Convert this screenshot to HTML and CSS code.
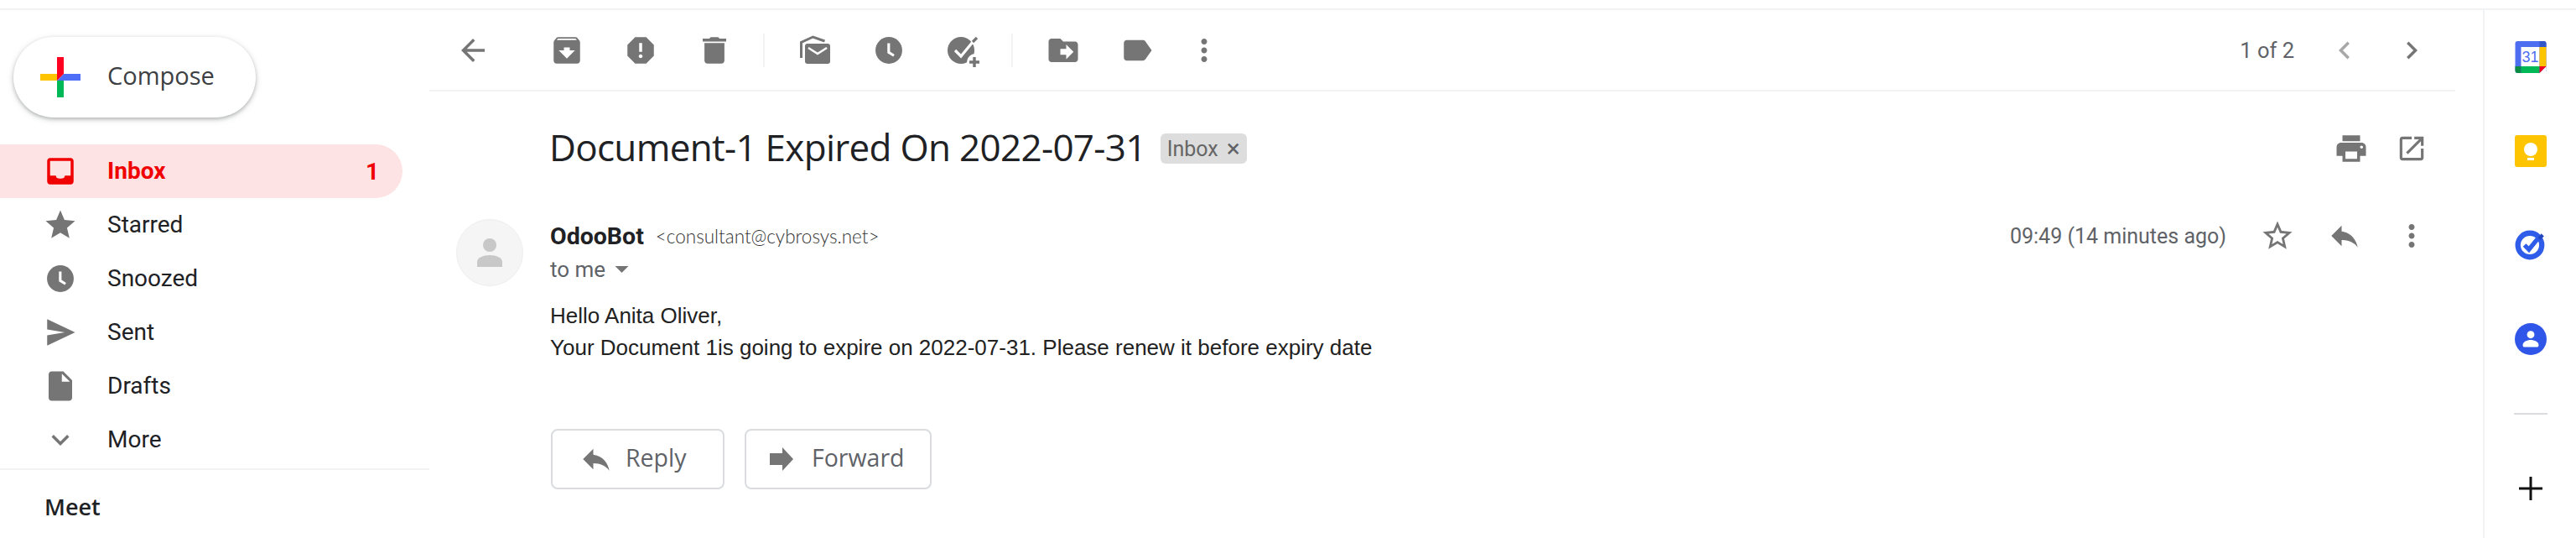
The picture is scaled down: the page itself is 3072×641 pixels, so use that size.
FILE: index.html
```html
<!DOCTYPE html>
<html>
<head>
<meta charset="utf-8">
<title>Inbox</title>
<link rel="stylesheet" href="styles.css">
</head>
<body>
<div class="topline"></div>
<div class="app">

<aside class="sidebar">
    <button class="compose">
        <svg class="compose-plus" viewBox="0 0 48 48">
            <polygon fill="#ffc400" points="0,20 20,20 20,28 0,28"/>
            <polygon fill="#00b956" points="20,28 28,28 28,48 20,48"/>
            <polygon fill="#4f6ef7" points="28,20 48,20 48,28 20,28"/>
            <polygon fill="#ff0020" points="20,0 28,0 28,20 20,28"/>
        </svg>
        <span class="compose-label">Compose</span>
    </button>
    <nav class="nav">
        <div class="nav-row active">
            <svg class="icon" viewBox="0 0 24 24"><path d="M19 3H4.99c-1.11 0-1.98.89-1.98 2L3 19c0 1.1.88 2 1.99 2H19c1.1 0 2-.9 2-2V5c0-1.11-.9-2-2-2zm0 12h-4c0 1.66-1.35 2-3 2s-3-.34-3-2H4.99V5H19v10z"/></svg>
            <span class="nav-label">Inbox</span>
            <span class="nav-count">1</span>
        </div>
        <div class="nav-row">
            <svg class="icon" viewBox="0 0 24 24"><path d="M12 17.27L18.18 21l-1.64-7.03L22 9.24l-7.19-.61L12 2 9.19 8.63 2 9.24l5.46 4.73L5.82 21z"/></svg>
            <span class="nav-label">Starred</span>
        </div>
        <div class="nav-row">
            <svg class="icon" viewBox="0 0 24 24"><path d="M12 2.9a9.1 9.1 0 1 0 0 18.2 9.1 9.1 0 0 0 0-18.2zm3 13.4l-4-2.5V7.2h1.8v5.7l3.1 1.9-.9 1.5z"/></svg>
            <span class="nav-label">Snoozed</span>
        </div>
        <div class="nav-row">
            <svg class="icon" viewBox="0 0 24 24"><path d="M3 3L22 12 3 21v-7l12-2-12-2z"/></svg>
            <span class="nav-label">Sent</span>
        </div>
        <div class="nav-row">
            <svg class="icon" viewBox="0 0 24 24"><path d="M6 2c-1.1 0-1.99.9-1.99 2L4 20c0 1.1.89 2 1.99 2H18c1.1 0 2-.9 2-2V8l-6-6H6zm7 7V3.5L18.5 9H13z"/></svg>
            <span class="nav-label">Drafts</span>
        </div>
        <div class="nav-row">
            <svg class="icon" viewBox="0 0 24 24"><path d="M7.41 8.59L12 13.17l4.59-4.58L18 10l-6 6-6-6 1.41-1.41z"/></svg>
            <span class="nav-label">More</span>
        </div>
    </nav>
    <div class="meet">Meet</div>
</aside>

<main class="main">
    <div class="toolbar">
        <div class="tool tool-back"><svg class="icon" viewBox="0 0 24 24"><path d="M20 11H7.83l5.59-5.59L12 4l-8 8 8 8 1.41-1.41L7.83 13H20v-2z"/></svg></div>
        <div class="tool"><svg class="icon" viewBox="0 0 24 24"><path d="M20.54 5.23l-1.39-1.68C18.88 3.21 18.47 3 18 3H6c-.47 0-.88.21-1.16.55L3.46 5.23C3.17 5.57 3 6.02 3 6.5V19c0 1.1.9 2 2 2h14c1.1 0 2-.9 2-2V6.5c0-.48-.17-.93-.46-1.27zM12 17.5L6.5 12H10v-2h4v2h3.5L12 17.5zM5.12 5l.81-1h12l.94 1H5.12z"/></svg></div>
        <div class="tool"><svg class="icon" viewBox="0 0 24 24"><path d="M15.73 3H8.27L3 8.27v7.46L8.27 21h7.46L21 15.73V8.27L15.73 3zM12 17.3c-.72 0-1.3-.58-1.3-1.3 0-.72.58-1.3 1.3-1.3.72 0 1.3.58 1.3 1.3 0 .72-.58 1.3-1.3 1.3zm1-4.3h-2V7h2v6z"/></svg></div>
        <div class="tool"><svg class="icon" viewBox="0 0 24 24"><path d="M5.2 19c0 1.1.9 2 2 2h9.6c1.1 0 2-.9 2-2V7H5.2v12zM20 4h-4.5l-1-1h-5l-1 1H4v2h16V4z"/></svg></div>
        <div class="tool-divider"></div>
        <div class="tool">
            <svg class="icon" viewBox="0 0 42 42">
                <path d="M4.5 30V11.5L18.5 5l14 5" fill="none" stroke="#757575" stroke-width="3"/>
                <rect x="9" y="13" width="30" height="24" rx="3"/>
                <path d="M13 18l11 7 11-7" fill="none" stroke="#fff" stroke-width="2.6"/>
            </svg>
        </div>
        <div class="tool"><svg class="icon" viewBox="0 0 24 24"><path d="M12 2.9a9.1 9.1 0 1 0 0 18.2 9.1 9.1 0 0 0 0-18.2zm3 13.4l-4-2.5V7.2h1.8v5.7l3.1 1.9-.9 1.5z"/></svg></div>
        <div class="tool">
            <svg class="icon-wide" viewBox="0 0 50 50">
                <circle cx="23" cy="25" r="16"/>
                <path d="M16 25l7 7 14-17" fill="none" stroke="#fff" stroke-width="3.2"/>
                <path d="M37 15l5-5" fill="none" stroke="#757575" stroke-width="3.2"/>
                <circle cx="40" cy="39" r="10" fill="#fff"/>
                <path d="M39 33v12M33 39h12" fill="none" stroke="#757575" stroke-width="3.4"/>
            </svg>
        </div>
        <div class="tool-divider"></div>
        <div class="tool"><svg class="icon" viewBox="0 0 24 24"><path d="M20 6h-8l-2-2H4c-1.1 0-2 .9-2 2v12c0 1.1.9 2 2 2h16c1.1 0 2-.9 2-2V8c0-1.1-.9-2-2-2zm-6 12v-3h-4v-4h4V8l5 5-5 5z"/></svg></div>
        <div class="tool"><svg class="icon" viewBox="0 0 24 24"><path d="M17.63 5.84C17.27 5.33 16.67 5 16 5L5 5.01C3.9 5.01 3 5.9 3 7v10c0 1.1.9 1.99 2 1.99L16 19c.67 0 1.27-.33 1.63-.84L22 12l-4.37-6.16z"/></svg></div>
        <div class="tool tool-more"><svg class="icon" viewBox="0 0 24 24"><path d="M12 8c1.1 0 2-.9 2-2s-.9-2-2-2-2 .9-2 2 .9 2 2 2zm0 2c-1.1 0-2 .9-2 2s.9 2 2 2 2-.9 2-2-.9-2-2-2zm0 6c-1.1 0-2 .9-2 2s.9 2 2 2 2-.9 2-2-.9-2-2-2z"/></svg></div>
        <div class="pager">
            <span class="pager-text">1 of 2</span>
            <div class="tool-small muted"><svg class="icon" viewBox="0 0 24 24"><path d="M15.41 7.41L14 6l-6 6 6 6 1.41-1.41L10.83 12z"/></svg></div>
            <div class="tool-small"><svg class="icon" viewBox="0 0 24 24"><path d="M10 6L8.59 7.41 13.17 12l-4.58 4.59L10 18l6-6z"/></svg></div>
        </div>
    </div>

    <div class="subject-row">
        <h1 class="subject">Document-1 Expired On 2022-07-31</h1>
        <span class="chip">Inbox <span class="chip-x">×</span></span>
        <div class="subject-actions">
            <div class="tool-small tool-print"><svg class="icon" viewBox="0 0 24 24"><path d="M19 8H5c-1.66 0-3 1.34-3 3v6h4v4h12v-4h4v-6c0-1.66-1.34-3-3-3zm-3 11H8v-5h8v5zm3-7c-.55 0-1-.45-1-1s.45-1 1-1 1 .45 1 1-.45 1-1 1zm-1-9H6v4h12V3z"/></svg></div>
            <div class="tool-small"><svg class="icon-open" viewBox="0 0 24 24"><path d="M19 19H5V5h7V3H5c-1.11 0-2 .9-2 2v14c0 1.1.89 2 2 2h14c1.1 0 2-.9 2-2v-7h-2v7zM14 3v2h3.59l-9.83 9.83 1.41 1.41L19 6.41V10h2V3h-7z"/></svg></div>
        </div>
    </div>

    <div class="message">
        <div class="avatar">
            <svg class="avatar-person" viewBox="0 0 30 34">
                <circle cx="15" cy="8" r="8"/>
                <path d="M0 34v-6c0-5 7-8 15-8s15 3 15 8v6z"/>
            </svg>
        </div>
        <div class="message-body">
            <div class="sender-row">
                <span class="sender">OdooBot</span>
                <span class="sender-mail">&lt;consultant@cybrosys.net&gt;</span>
                <span class="msg-time">09:49 (14 minutes ago)</span>
                <div class="tool-small"><svg class="icon" viewBox="0 0 24 24"><path d="M22 9.24l-7.19-.62L12 2 9.19 8.63 2 9.24l5.46 4.73L5.82 21 12 17.27 18.18 21l-1.63-7.03L22 9.24zM12 15.4l-3.76 2.27 1-4.28-3.32-2.88 4.38-.38L12 6.1l1.71 4.04 4.38.38-3.32 2.88 1 4.28L12 15.4z"/></svg></div>
                <div class="tool-small"><svg class="icon" viewBox="0 0 24 24"><path d="M10 9V5l-7 7 7 7v-4.1c5 0 8.5 1.6 11 5.1-1-5-4-10-11-11z"/></svg></div>
                <div class="tool-small"><svg class="icon" viewBox="0 0 24 24"><path d="M12 8c1.1 0 2-.9 2-2s-.9-2-2-2-2 .9-2 2 .9 2 2 2zm0 2c-1.1 0-2 .9-2 2s.9 2 2 2 2-.9 2-2-.9-2-2-2zm0 6c-1.1 0-2 .9-2 2s.9 2 2 2 2-.9 2-2-.9-2-2-2z"/></svg></div>
            </div>
            <div class="to-row">
                <span>to me</span>
                <svg class="caret" viewBox="0 0 16 8"><polygon points="0,0 16,0 8,8"/></svg>
            </div>
            <div class="mail-text">
                <div>Hello Anita Oliver,</div>
                <div>Your Document 1is going to expire on 2022-07-31. Please renew it before expiry date</div>
            </div>
            <div class="reply-buttons">
                <button class="reply-btn btn-reply">
                    <svg class="icon" viewBox="0 0 24 24"><path d="M10 9V5l-7 7 7 7v-4.1c5 0 8.5 1.6 11 5.1-1-5-4-10-11-11z"/></svg>
                    <span class="btn-label">Reply</span>
                </button>
                <button class="reply-btn btn-forward">
                    <svg class="icon-forward" viewBox="0 0 28 28"><path d="M0 7h15V0l13 14-13 14v-7H0z"/></svg>
                    <span class="btn-label">Forward</span>
                </button>
            </div>
        </div>
    </div>
</main>

<aside class="apps">
    <div class="app-item">
        <svg class="app-icon" viewBox="0 0 37 38">
            <rect width="37" height="38" rx="3" fill="#4e6ef2"/>
            <rect x="7" y="7" width="22" height="23" fill="#fff"/>
            <path d="M29 0h5a3 3 0 0 1 3 3v4h-8z" fill="#3357c8"/>
            <rect x="29" y="7" width="8" height="23" fill="#ffc400"/>
            <rect x="7" y="30" width="22" height="8" fill="#00b956"/>
            <path d="M0 30h7v8H3a3 3 0 0 1-3-3z" fill="#0a8a42"/>
            <polygon points="37,30 37,38 29,38" fill="#fff"/>
            <polygon points="29,30 37,30 29,38" fill="#f00020"/>
            <text class="cal-text" x="18" y="25">31</text>
        </svg>
    </div>
    <div class="app-item">
        <svg class="app-icon" viewBox="0 0 38 38">
            <rect width="38" height="38" rx="3" fill="#ffc400"/>
            <circle cx="19" cy="17" r="8" fill="#fff"/>
            <rect x="15" y="27" width="8" height="3" fill="#fff"/>
        </svg>
    </div>
    <div class="app-item">
        <svg class="app-icon" viewBox="0 0 36 34">
            <circle cx="17" cy="17" r="13.5" fill="none" stroke="#2f5ce8" stroke-width="6"/>
            <path d="M11 17l5 5 13-16" fill="none" stroke="#2f5ce8" stroke-width="5"/>
            <path d="M26 9l4-5 3 3-4 4z" fill="#2347c0"/>
        </svg>
    </div>
    <div class="app-item">
        <svg class="app-icon" viewBox="0 0 36 36">
            <circle cx="18" cy="18" r="18" fill="#2f56e8"/>
            <circle cx="18" cy="13" r="4.2" fill="#fff"/>
            <path d="M9 25c0-4 5-6 9-6s9 2 9 6c0 1-1 2-2 2H11c-1 0-2-1-2-2z" fill="#fff"/>
        </svg>
    </div>
    <div class="apps-divider"></div>
    <div class="app-item">
        <svg class="app-plus" viewBox="0 0 28 28"><path d="M14 0v28M0 14h28" fill="none" stroke="#111" stroke-width="3"/></svg>
    </div>
</aside>

</div>
</body>
</html>
```

FILE: styles.css
```css
html, body {
    margin: 0;
    padding: 0;
    height: 641px;
    overflow: hidden;
    background: #fff;
}

body {
    font-family: Roboto, "Liberation Sans", sans-serif;
    color: #202124;
}

.topline {
    height: 10px;
    border-bottom: 2px solid #f1f3f4;
}

.app {
    display: flex;
    height: 629px;
}

.icon {
    width: 42px;
    height: 42px;
    fill: #757575;
    display: block;
}

/* sidebar */
.sidebar {
    width: 512px;
    flex: none;
    padding-top: 32px;
}

.compose {
    display: flex;
    align-items: center;
    width: 289px;
    height: 96px;
    margin-left: 16px;
    padding: 0 0 0 32px;
    border: 0;
    border-radius: 48px;
    background: #fff;
    box-shadow: 0 2px 4px rgba(60, 64, 67, .3), 0 2px 8px rgba(60, 64, 67, .15);
    font-family: "Open Sans", sans-serif;
    font-size: 29px;
    color: #3c4043;
}

.compose-plus {
    width: 48px;
    height: 48px;
    margin-right: 32px;
}

.compose-label {
    padding-bottom: 5px;
}

.nav {
    margin-top: 32px;
    padding-bottom: 2px;
    border-bottom: 2px solid #f1f3f4;
}

.nav-row {
    display: flex;
    align-items: center;
    width: 480px;
    height: 64px;
    padding-left: 51px;
    padding-right: 28px;
    box-sizing: border-box;
    border-radius: 0 32px 32px 0;
    font-size: 28px;
}

.nav-label {
    margin-left: 35px;
    padding-bottom: 2px;
    flex: 1;
}

.nav-row.active {
    background: #fde3e3;
    color: #f00000;
    font-weight: 700;
}

.nav-row.active .icon {
    fill: #f00000;
}

.meet {
    margin: 24px 0 0 53px;
    font-family: "Open Sans", sans-serif;
    font-size: 27px;
    font-weight: 600;
    line-height: 40px;
}

/* main column */
.main {
    width: 2416px;
    flex: none;
}

.toolbar {
    display: flex;
    align-items: center;
    height: 95px;
    border-bottom: 2px solid #f1f3f4;
}

.tool {
    width: 88px;
    height: 42px;
    display: flex;
    justify-content: center;
    align-items: center;
    flex: none;
}

.tool-back {
    margin-left: 8px;
    margin-right: 24px;
}

.tool-more {
    width: 72px;
}

.tool-divider {
    width: 2px;
    height: 40px;
    margin: 0 16px 0 14px;
    background: #f1f3f4;
}

.icon-wide {
    width: 50px;
    height: 50px;
    fill: #757575;
    flex: none;
}

.pager {
    display: flex;
    align-items: center;
    margin-left: auto;
    padding-right: 12px;
}

.pager-text {
    margin-right: 20px;
    font-size: 25.5px;
    color: #5f6368;
}

.tool-small {
    width: 80px;
    height: 42px;
    display: flex;
    justify-content: center;
    align-items: center;
    flex: none;
}

.muted .icon {
    fill: #a8a8a8;
}

.subject-row {
    display: flex;
    align-items: center;
    height: 136px;
    padding: 0 12px 0 145px;
}

.subject {
    margin: -4px 0 0 -2px;
    font-family: "Open Sans", sans-serif;
    font-size: 44px;
    font-weight: 400;
    letter-spacing: -.7px;
    color: #202124;
}

.chip {
    display: flex;
    align-items: center;
    height: 36px;
    margin-left: 17px;
    padding: 0 8px;
    border-radius: 6px;
    background: #ddd;
    color: #666;
    font-size: 25px;
}

.chip-x {
    margin-left: 10px;
    font-size: 30px;
    line-height: 30px;
    color: #5f6368;
}

.subject-actions {
    display: flex;
    margin-left: auto;
}

.tool-print {
    margin-right: -8px;
}

.icon-open {
    width: 38px;
    height: 38px;
    fill: #757575;
}

.message {
    display: flex;
    margin-top: 16px;
    padding: 0 12px 0 32px;
}

.avatar {
    width: 80px;
    height: 80px;
    margin-right: 32px;
    flex: none;
    display: flex;
    justify-content: center;
    align-items: center;
    box-sizing: border-box;
    border: 1px solid #eee;
    border-radius: 50%;
    background: #f5f5f5;
}

.avatar-person {
    width: 30px;
    height: 34px;
    fill: #c8c8c8;
}

.message-body {
    flex: 1;
}

.sender-row {
    display: flex;
    align-items: center;
    height: 40px;
}

.sender {
    font-size: 28.5px;
    font-weight: 700;
}

.sender-mail {
    margin-left: 14px;
    flex: 1;
    font-family: Lato, sans-serif;
    font-size: 22.5px;
    font-weight: 300;
    color: #333;
}

.msg-time {
    margin-right: 21px;
    font-size: 25px;
    color: #5f6368;
}

.to-row {
    display: flex;
    align-items: center;
    height: 40px;
    font-size: 26px;
    color: #5f6368;
}

.caret {
    width: 17px;
    height: 8px;
    margin-left: 11px;
    fill: #757575;
}

.mail-text {
    margin-top: 16px;
    font-family: "Liberation Sans", sans-serif;
    font-size: 26px;
    line-height: 38px;
    color: #222;
}

.reply-buttons {
    display: flex;
    gap: 24px;
    margin: 78px 0 0 1px;
}

.reply-btn {
    display: flex;
    align-items: center;
    height: 72px;
    padding: 0;
    border: 2px solid #dadce0;
    border-radius: 8px;
    background: #fff;
    font-family: "Open Sans", sans-serif;
    font-size: 28.5px;
    color: #5f6368;
}

.btn-label {
    padding-bottom: 5px;
}

.btn-reply {
    width: 207px;
    padding-left: 31px;
}

.btn-reply .btn-label {
    margin-left: 14px;
}

.btn-forward {
    width: 223px;
    padding-left: 28px;
}

.btn-forward .btn-label {
    margin-left: 22px;
}

.icon-forward {
    width: 28px;
    height: 28px;
    fill: #757575;
}

/* right panel */
.apps {
    width: 109px;
    flex: none;
    margin-left: 33px;
    border-left: 2px solid #f1f3f4;
    display: flex;
    flex-direction: column;
    align-items: center;
    padding-top: 32px;
}

.app-item {
    flex: none;
    height: 48px;
    margin-bottom: 64px;
    display: flex;
    align-items: center;
}

.app-icon {
    width: 38px;
    height: 38px;
    display: block;
}

.cal-text {
    font-family: "Liberation Sans", sans-serif;
    font-size: 18px;
    fill: #4e6ef2;
    text-anchor: middle;
}

.apps-divider {
    flex: none;
    width: 40px;
    height: 2px;
    margin: 0 0 64px;
    background: #dadce0;
}

.app-plus {
    width: 28px;
    height: 28px;
}
```
